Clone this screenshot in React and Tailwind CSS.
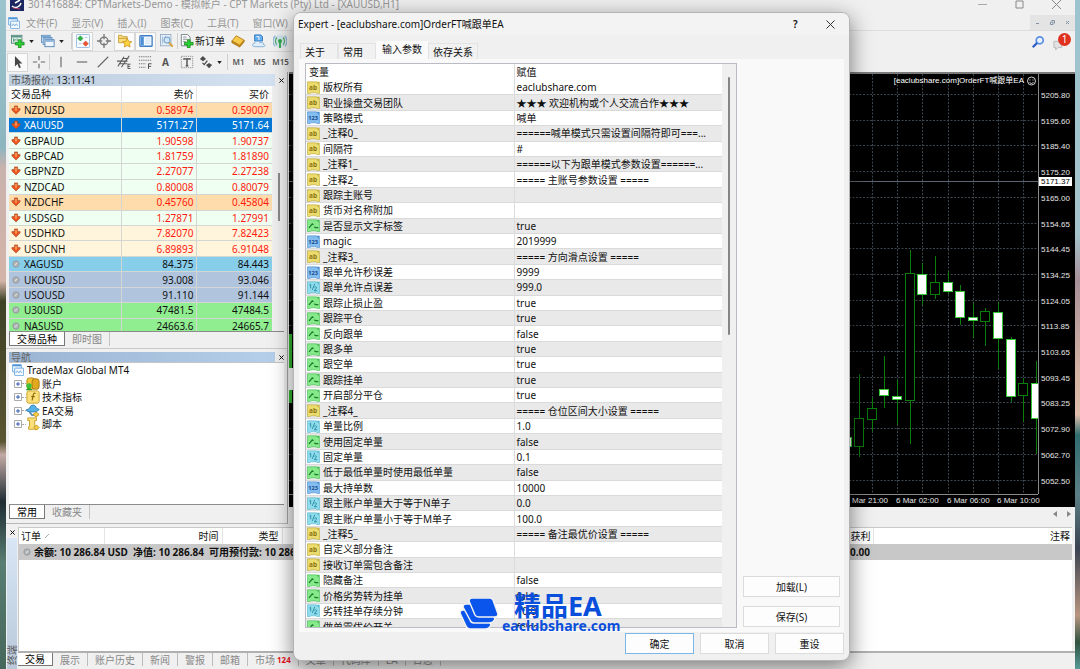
import React, { useState } from 'react';

const quotes = [
  { symbol: 'NZDUSD', bid: '0.58974', ask: '0.59007', row: 'bg-[#ffdcab]', down: true },
  { symbol: 'XAUUSD', bid: '5171.27', ask: '5171.64', row: 'bg-[#0078d7]', down: true, selected: true },
  { symbol: 'GBPAUD', bid: '1.90598', ask: '1.90737', row: 'bg-[#effff1]', down: true },
  { symbol: 'GBPCAD', bid: '1.81759', ask: '1.81890', row: 'bg-[#effff1]', down: true },
  { symbol: 'GBPNZD', bid: '2.27077', ask: '2.27238', row: 'bg-[#effff1]', down: true },
  { symbol: 'NZDCAD', bid: '0.80008', ask: '0.80079', row: 'bg-[#effff1]', down: true },
  { symbol: 'NZDCHF', bid: '0.45760', ask: '0.45804', row: 'bg-[#ffdcab]', down: true },
  { symbol: 'USDSGD', bid: '1.27871', ask: '1.27991', row: 'bg-[#effff1]', down: true },
  { symbol: 'USDHKD', bid: '7.82070', ask: '7.82423', row: 'bg-[#fff5dc]', down: true },
  { symbol: 'USDCNH', bid: '6.89893', ask: '6.91048', row: 'bg-[#fff5dc]', down: true },
  { symbol: 'XAGUSD', bid: '84.375', ask: '84.443', row: 'bg-[#87ceeb]' },
  { symbol: 'UKOUSD', bid: '93.008', ask: '93.046', row: 'bg-[#b0c4de]' },
  { symbol: 'USOUSD', bid: '91.110', ask: '91.144', row: 'bg-[#b0c4de]' },
  { symbol: 'U30USD', bid: '47481.5', ask: '47484.5', row: 'bg-[#90ee90]' },
  { symbol: 'NASUSD', bid: '24663.6', ask: '24665.7', row: 'bg-[#90ee90]' },
];

const params = [
  ['str', '版权所有', 'eaclubshare.com'],
  ['str', '职业操盘交易团队', '★★★ 欢迎机构或个人交流合作★★★'],
  ['int', '策略模式', '喊单'],
  ['str', '_注释0_', '======喊单模式只需设置间隔符即可===...'],
  ['str', '间隔符', '#'],
  ['str', '_注释1_', '======以下为跟单模式参数设置======...'],
  ['str', '_注释2_', '===== 主账号参数设置 ====='],
  ['str', '跟踪主账号', ''],
  ['str', '货币对名称附加', ''],
  ['bool', '是否显示文字标签', 'true'],
  ['int', 'magic', '2019999'],
  ['str', '_注释3_', '===== 方向滑点设置 ====='],
  ['int', '跟单允许秒误差', '9999'],
  ['dbl', '跟单允许点误差', '999.0'],
  ['bool', '跟踪止损止盈', 'true'],
  ['bool', '跟踪平仓', 'true'],
  ['bool', '反向跟单', 'false'],
  ['bool', '跟多单', 'true'],
  ['bool', '跟空单', 'true'],
  ['bool', '跟踪挂单', 'true'],
  ['bool', '开启部分平仓', 'true'],
  ['str', '_注释4_', '===== 仓位区间大小设置 ====='],
  ['dbl', '单量比例', '1.0'],
  ['bool', '使用固定单量', 'false'],
  ['dbl', '固定单量', '0.1'],
  ['bool', '低于最低单量时使用最低单量', 'false'],
  ['int', '最大持单数', '10000'],
  ['dbl', '跟主账户单量大于等于N单子', '0.0'],
  ['dbl', '跟主账户单量小于等于M单子', '100.0'],
  ['str', '_注释5_', '===== 备注最优价设置 ====='],
  ['str', '自定义部分备注', ''],
  ['str', '接收订单需包含备注', ''],
  ['bool', '隐藏备注', 'false'],
  ['bool', '价格劣势转为挂单', 'false'],
  ['dbl', '劣转挂单存续分钟', '10.0'],
  ['bool', '做单需优价开关', 'false'],
];

const priceLevels = [
  '5205.80', '5195.60', '5185.40', '5175.20', '5165.00', '5154.65', '5144.45', '5134.25',
  '5124.05', '5113.85', '5103.65', '5093.45', '5083.25', '5072.90', '5062.70', '5052.50',
];

// x centre, body top, body bottom, wick top, wick bottom, bearish
const candles = [
  [847, 437, 446, 430, 452, true],
  [859, 418, 446, 374, 457, false],
  [872, 408, 419, 398, 431, false],
  [884, 389, 395, 356, 408, true],
  [897, 396, 399, 380, 425, true],
  [910, 273, 400, 250, 444, false],
  [922, 274, 294, 263, 305, true],
  [935, 282, 294, 256, 299, false],
  [948, 282, 291, 271, 294, true],
  [960, 291, 317, 285, 325, true],
  [973, 317, 320, 303, 338, true],
  [985, 311, 321, 308, 346, false],
  [998, 312, 338, 302, 369, true],
  [1011, 339, 396, 337, 402, true],
  [1023, 383, 395, 378, 422, false],
  [1036, 383, 418, 361, 454, true],
];

const Svg = ({ children, className = 'w-3.5 h-3.5' }) => (
  <svg viewBox="0 0 16 16" className={`shrink-0 ${className}`} fill="none" aria-hidden="true">
    {children}
  </svg>
);

const Plus = () => (
  <path d="M8.500 6.500h3v3h3.500v3h-3.500v3.500h-3v-3.500h-3.500v-3h3.500z" fill="#2bd334" stroke="#0e7d16" strokeWidth=".8" />
);

const NewChartIcon = () => (
  <Svg>
    <rect x=".5" y="1.500" width="12" height="9" fill="#e8f3f0" stroke="#4d8579" />
    <path d="M1 2h11v2H1z" fill="#5f9488" />
    <path d="M3 5v4M3 7h2v-1M7 5v3" stroke="#3e8a6c" />
    <Plus />
  </Svg>
);

const ProfilesIcon = () => (
  <Svg>
    <rect x=".5" y="1.500" width="10" height="8" fill="#dbeaf8" stroke="#5e8ebd" />
    <rect x="2.500" y="4" width="10" height="8" fill="#dbeaf8" stroke="#5e8ebd" />
    <rect x="4.500" y="6.500" width="10.500" height="8" fill="#eef6fd" stroke="#4d7fb3" />
    <path d="M1 3h9M3 5.500h9M5 8h9.500" stroke="#7ba6d2" strokeWidth="1.500" />
  </Svg>
);

const MarketWatchIcon = () => (
  <Svg>
    <rect x=".5" y=".5" width="15" height="15" rx="1" fill="#f6fbff" stroke="#8bb4dc" />
    <path d="M5 2l3 3-3 3-3-3z" fill="#2fb344" stroke="#1a8531" strokeWidth=".6" />
    <path d="M11 8l3 3-3 3-3-3z" fill="#f0532c" stroke="#b93314" strokeWidth=".6" />
    <path d="M10 4h3M3 11h3" stroke="#a8c4de" />
  </Svg>
);

const TargetIcon = () => (
  <Svg>
    <circle cx="8" cy="8" r="4.500" stroke="#777" strokeWidth="1.500" />
    <path d="M8 0v6M8 10v6M0 8h6M10 8h6" stroke="#777" strokeWidth="1.500" />
  </Svg>
);

const StarPath = () => (
  <path d="M10.500 5l1.700 3.300 3.500.500-2.600 2.500.700 3.600-3.300-1.700-3.200 1.700.600-3.600-2.600-2.500 3.600-.500z" fill="#ffd23d" stroke="#c08a12" strokeWidth=".8" />
);

const FavoritesIcon = () => (
  <Svg>
    <path d="M.5 1.500h4l1 1.500h5v7h-10z" fill="#f8dc7d" stroke="#c59b34" />
    <path d="M1 5h9" stroke="#c59b34" />
    <StarPath />
  </Svg>
);

const TerminalIcon = () => (
  <Svg>
    <rect x="1" y="2" width="14" height="12" rx="1" fill="#f4f9ff" stroke="#3f7fc4" strokeWidth="1.500" />
    <path d="M2 3h3.500v10H2z" fill="#4d8fd6" />
    <path d="M7 5.500h6M7 8h6M7 10.500h6" stroke="#c5d9ee" />
  </Svg>
);

const TesterIcon = () => (
  <Svg>
    <rect x=".5" y=".5" width="12" height="13" fill="#e5eef7" stroke="#90aac4" />
    <path d="M3 3v8M6 2v4M10 3v8" stroke="#8fb0d0" />
    <circle cx="8" cy="7" r="3.500" fill="#cfe6fa" stroke="#5f8fbd" />
    <path d="M10.500 10l4 4.500" stroke="#d8a23c" strokeWidth="2.200" />
  </Svg>
);

const NewOrderIcon = () => (
  <Svg>
    <path d="M1.500.5h7l3 3v10h-10z" fill="#fafafa" stroke="#6c7a80" />
    <path d="M3.500 3.500h4M3.500 6h5M3.500 8.500h3" stroke="#7b8a90" />
    <Plus />
  </Svg>
);

const GoldIcon = () => (
  <Svg>
    <path d="M1 8l5-6 9 5-5 6z" fill="#f7c948" stroke="#b17b12" />
    <path d="M1 8v2l9 5 5-6V7l-5 6z" fill="#cf9320" stroke="#9c6a0d" strokeWidth=".7" />
  </Svg>
);

const ServerIcon = () => (
  <Svg>
    <path d="M3 1h7l2 2v5H3z" fill="#64aef0" stroke="#2c75bd" />
    <path d="M5 3h3v4" stroke="#fff" />
    <path d="M3 14.500c-3 0-3-4 0-4 .5-3 5-3 6-.5 3-1 5 .5 4 2 2.500 0 2 2.500 0 2.500z" fill="#dfeefb" stroke="#7aa8d3" />
  </Svg>
);

const SignalIcon = () => (
  <Svg>
    <circle cx="8" cy="8" r="7.500" fill="#d6e6ee" />
    <path d="M4.500 4a5.500 5.500 0 000 8M11.500 4a5.500 5.500 0 010 8" stroke="#4fa663" strokeWidth="1.300" />
    <path d="M2.500 2a8.500 8.500 0 000 12M13.500 2a8.500 8.500 0 010 12" stroke="#8fb7d8" strokeWidth="1.300" />
    <circle cx="8" cy="8" r="2.300" fill="#2ea84a" />
    <path d="M8 9v7" stroke="#2ea84a" strokeWidth="2" />
  </Svg>
);

const CursorIcon = () => (
  <Svg>
    <path d="M4.500 1v12l2.800-2.600L9.300 15l2-.9-2-4.300H13z" fill="#484848" />
  </Svg>
);

const ChannelIcon = () => (
  <Svg>
    <path d="M1 13L8 2M5 14L14 1M0 7h12M2 10h10M6 4h7" stroke="#5a5a5a" strokeWidth="1.200" />
    <path d="M15.500 10.500H12.500v5h3M12.500 13h2.500" stroke="#444" />
  </Svg>
);

const FiboIcon = () => (
  <Svg>
    <path d="M1 2h14M1 6h14M1 10h8M1 14h8" stroke="#777" strokeWidth="1.200" strokeDasharray="1.500 1" />
    <path d="M15.500 10H12v6M12 13h3" stroke="#444" />
  </Svg>
);

const LabelIcon = () => (
  <Svg>
    <rect x="1.500" y="1.500" width="13" height="13" stroke="#888" strokeDasharray="1.500 1" />
    <path d="M4.500 5.500V4.500h7v1M8 4.500v8M6.500 12.500h3" stroke="#444" strokeWidth="1.500" />
  </Svg>
);

const ArrowsIcon = () => (
  <Svg>
    <path d="M4.500 1l3.500 3.500-3.500 2.500L1 4.500zM11.500 9l3.500 2.500-3.500 3.500L8 11.500z" fill="#4b4b4b" />
    <path d="M4 9l2 2 3.500-4.500" stroke="#4b4b4b" strokeWidth="1.500" />
  </Svg>
);

const ChartWindowIcon = () => (
  <Svg className="w-3 h-3">
    <rect x=".5" y=".5" width="12" height="10" rx="1" fill="#e8f4ff" stroke="#4c94d8" />
    <path d="M1 2h11" stroke="#4c94d8" strokeWidth="2" />
    <rect x="3.500" y="5.500" width="12" height="10" rx="1" fill="#f5faff" stroke="#4c94d8" />
    <path d="M5 12l2-3 2 3 2-3 2 3" stroke="#5d9fdc" />
  </Svg>
);

const DownIcon = () => (
  <Svg className="w-2.5 h-2.5">
    <path d="M5.500 1.500h5v4H14.500v2.500l-6.500 6.500L1.500 8V5.500h4z" fill="#e9531d" stroke="#a8502e" />
    <path d="M6.500 3h3v6h-3z" fill="#ff9350" />
  </Svg>
);

const IdleIcon = () => (
  <Svg className="w-2.5 h-2.5">
    <circle cx="8" cy="8" r="5" fill="#b4b8ba" stroke="#8f9396" strokeWidth="1.500" />
    <path d="M5.500 10.500l5-5" stroke="#dcdedf" strokeWidth="1.500" />
  </Svg>
);

const typeStyles = {
  str: { fill: '#ecdc6e', edge: '#b5a02c', fold: '#c7b33d' },
  int: { fill: '#84bdf0', edge: '#4386c8', fold: '#3f87cd' },
  dbl: { fill: '#8fdcec', edge: '#4bb0c6', fold: '#4fb8cf' },
  bool: { fill: '#86ea8b', edge: '#3bb549', fold: '#44bd50' },
};

const TypeIcon = ({ type }) => {
  const s = typeStyles[type];
  return (
    <Svg className="w-[13px] h-[13px]">
      <path d="M.5 1h11l4 4v10.500H12l-1-1H5l-1 1H.5z" fill={s.fill} stroke={s.edge} strokeWidth=".7" />
      <path d="M11.500 1l4 4v-4z" fill={s.fold} />
      {type === 'bool' && (
        <path d="M2.500 11l4-5 1.500 1M9 9.500l1.500 1H14" stroke="#1c7e2a" strokeWidth="1.600" />
      )}
      {type === 'dbl' && (
        <path d="M3 5l1.500-1v5M9.500 3.500L6.500 11M9 8c1-1.500 3.500-1 2.500.8L9 12h3.500" stroke="#2187a0" strokeWidth="1.100" />
      )}
      {(type === 'str' || type === 'int') && (
        <text
          x="7.500"
          y="11.500"
          textAnchor="middle"
          fontSize={type === 'int' ? 7 : 8}
          fontWeight="bold"
          fill={type === 'str' ? '#8a7614' : '#17498a'}
        >
          {type === 'str' ? 'ab' : '123'}
        </text>
      )}
    </Svg>
  );
};

const ToolButton = ({ label, active, children }) => (
  <button
    aria-label={label}
    className={`w-[21px] h-[19px] flex items-center justify-center shrink-0 ${
      active ? 'bg-[#fafafa] border border-[#d6d6d6]' : ''
    }`}
  >
    {children}
  </button>
);

const Caret = () => (
  <svg viewBox="0 0 6 4" className="w-[5px] h-[3px] shrink-0" aria-hidden="true">
    <path d="M0 0h6L3 4z" fill="#222" />
  </svg>
);

const Separator = () => <span className="w-px h-4 bg-[#cfcfcf] shrink-0" />;

const TitleBar = () => (
  <div className="h-[22px] shrink-0 flex items-center pl-1 pr-3.5 text-[#979797]">
    <svg viewBox="0 0 14 14" className="w-3.5 h-3.5 shrink-0" aria-hidden="true">
      <rect width="14" height="14" fill="#1c2660" />
      <path d="M2 9c3 3 8 1 9-3M5 6l5-3" stroke="#fff" strokeWidth="1.500" fill="none" />
      <path d="M3 11l7 1" stroke="#c0446a" />
    </svg>
    <span className="ml-1 whitespace-nowrap flex-1">301416884: CPTMarkets-Demo - 模拟帐户 - CPT Markets (Pty) Ltd - [XAUUSD,H1]</span>
    <div className="flex gap-7">
      <button aria-label="最小化">
        <svg viewBox="0 0 9 9" className="w-[9px] h-[9px]"><path d="M0 4.500h9" stroke="#aaa" /></svg>
      </button>
      <button aria-label="最大化">
        <svg viewBox="0 0 9 9" className="w-[9px] h-[9px]"><path d="M1 1h7v7H1z" stroke="#888" fill="none" /></svg>
      </button>
      <button aria-label="关闭">
        <svg viewBox="0 0 9 9" className="w-[9px] h-[9px]"><path d="M0 0l9 9M9 0L0 9" stroke="#888" /></svg>
      </button>
    </div>
  </div>
);

const MenuBar = () => (
  <nav className="h-4 shrink-0 flex items-center pl-[2px] border-b border-[#dedede] text-[#979797]">
    <ChartWindowIcon />
    <div className="flex gap-3.5 pl-1.5 flex-1 whitespace-nowrap">
      {['文件(F)', '显示(V)', '插入(I)', '图表(C)', '工具(T)', '窗口(W)'].map(item => (
        <button key={item}>{item}</button>
      ))}
    </div>
    <div className="self-stretch w-[45px] bg-[#e4e4e4] flex items-center justify-around">
      <svg viewBox="0 0 5 5" className="w-[5px] h-[5px]"><path d="M1 3.500h3" stroke="#8592a3" /></svg>
      <svg viewBox="0 0 5 5" className="w-[5px] h-[5px]"><path d="M1.500.5h3v3M.5 2h2.500v2.500H.5z" stroke="#8592a3" fill="none" /></svg>
      <svg viewBox="0 0 5 5" className="w-[5px] h-[5px]"><path d="M1 1l3 3M4 1L1 4" stroke="#8592a3" /></svg>
    </div>
  </nav>
);

const Toolbars = () => (
  <div className="flex h-[41px] shrink-0 bg-[#f0f0f0]">
    <div className="flex-1 min-w-0 overflow-hidden">
      <div className="flex items-center h-[21px] pl-[5px] w-[300px] border-b border-[#dcdcdc]">
        <button aria-label="新图表" className="w-[30px] flex items-center gap-1 shrink-0"><NewChartIcon /><Caret /></button>
        <button aria-label="配置文件" className="w-[30px] flex items-center gap-1 shrink-0"><ProfilesIcon /><Caret /></button>
        <Separator />
        <ToolButton label="市场报价" active><MarketWatchIcon /></ToolButton>
        <ToolButton label="数据窗口"><TargetIcon /></ToolButton>
        <ToolButton label="导航" active><FavoritesIcon /></ToolButton>
        <ToolButton label="终端" active><TerminalIcon /></ToolButton>
        <ToolButton label="策略测试"><TesterIcon /></ToolButton>
        <Separator />
        <button className="flex items-center gap-px px-0.5 whitespace-nowrap shrink-0"><NewOrderIcon />新订单</button>
        <ToolButton label="MetaEditor"><GoldIcon /></ToolButton>
        <ToolButton label="虚拟主机"><ServerIcon /></ToolButton>
        <ToolButton label="信号"><SignalIcon /></ToolButton>
      </div>
      <div className="flex items-center h-5 pl-px text-[#555]">
        <ToolButton label="光标" active><CursorIcon /></ToolButton>
        <ToolButton label="十字准线"><Svg><path d="M8 1v5M8 10v5M1 8h5M10 8h5" stroke="#666" strokeWidth="1.300" /></Svg></ToolButton>
        <Separator />
        <ToolButton label="垂直线"><Svg><path d="M8 2v12" stroke="#666" strokeWidth="1.300" /></Svg></ToolButton>
        <ToolButton label="水平线"><Svg><path d="M2 8h12" stroke="#666" strokeWidth="1.300" /></Svg></ToolButton>
        <ToolButton label="趋势线"><Svg><path d="M2 14L14 2" stroke="#666" strokeWidth="1.300" /></Svg></ToolButton>
        <ToolButton label="等距通道"><ChannelIcon /></ToolButton>
        <ToolButton label="斐波那契"><FiboIcon /></ToolButton>
        <ToolButton label="文字"><span className="font-bold">A</span></ToolButton>
        <ToolButton label="文字标签"><LabelIcon /></ToolButton>
        <button aria-label="箭头" className="w-[30px] flex items-center gap-1 pl-0.5 shrink-0"><ArrowsIcon /><Caret /></button>
        <Separator />
        {['M1', 'M5', 'M15'].map(tf => (
          <button key={tf} className="w-[21px] text-[8px] font-semibold text-center shrink-0">{tf}</button>
        ))}
      </div>
    </div>
    <div className="flex items-start gap-2 pt-1 pr-1">
      <button aria-label="搜索">
        <Svg>
          <circle cx="10" cy="6" r="4" stroke="#5b8fe6" strokeWidth="2" fill="#e9f2ff" />
          <path d="M7 9l-5 5" stroke="#2d5fc4" strokeWidth="2.500" />
        </Svg>
      </button>
      <button aria-label="消息" className="relative w-[18px] h-4">
        <Svg><path d="M1 6h9v7H6l-3 3v-3H1z" fill="#e2e2e2" stroke="#b5b5b5" /></Svg>
        <span className="absolute right-0 -top-0.5 w-[13px] h-[13px] rounded-full bg-[#e0301e] text-white text-[10px] leading-[13px] text-center">1</span>
      </button>
    </div>
  </div>
);

const CloseMark = () => (
  <svg viewBox="0 0 6 6" className="w-[5px] h-[5px]" aria-hidden="true">
    <path d="M.5.5l5 5M5.500.5l-5 5" stroke="#111" strokeWidth="1.200" />
  </svg>
);

const PanelTabs = ({ tabs }) => (
  <div className="flex h-[15px] shrink-0 border-t border-[#8b8b8b] mr-[3px]">
    {tabs.map((tab, i) => (
      <button
        key={tab}
        className={`px-[7px] h-full flex items-center ${
          i === 0 ? 'bg-white text-black border-x border-b border-[#777]' : 'text-[#888] border-r border-[#c4c4c4]'
        }`}
      >
        {tab}
      </button>
    ))}
  </div>
);

const MarketWatch = () => (
  <section className="h-[277px] shrink-0 flex flex-col pl-[3px] py-0.5 border-b border-[#c9c9c9]">
    <div className="h-3 shrink-0 flex items-center text-[#555]">
      <div className="w-[266px] h-full pl-0.5 flex items-center whitespace-pre bg-gradient-to-r from-[#bccddf] to-[#d5e2f1]">
        市场报价: <span className="text-[#222]">13:11:41</span>
      </div>
      <button aria-label="关闭" className="ml-1"><CloseMark /></button>
    </div>
    <div className="flex-1 min-h-0 overflow-hidden flex">
      <table className="w-[263px] h-[247px] shrink-0 table-fixed border-collapse bg-white">
        <thead>
          <tr className="h-4">
            <th className="w-28 p-0 pl-0.5 text-left font-normal">交易品种</th>
            <th className="w-[75px] p-0 pr-0.5 text-right font-normal border-l border-[#e4e4e4]">卖价</th>
            <th className="p-0 pr-[3px] text-right font-normal border-l border-[#e4e4e4]">买价</th>
          </tr>
        </thead>
        <tbody>
          {quotes.map(q => {
            const color = q.selected ? 'text-white' : q.down ? 'text-[#ff1a10]' : 'text-[#111]';
            return (
              <tr key={q.symbol} className={`${q.row} border-t border-[#d3d6d3]`}>
                <td className={`p-0 pl-0.5 ${q.selected ? 'text-white' : ''}`}>
                  <span className="flex items-center gap-[3px]">
                    {q.down ? <DownIcon /> : <IdleIcon />}
                    {q.symbol}
                  </span>
                </td>
                <td className={`p-0 pr-0.5 text-right border-l border-[#d3d6d3] ${color}`}>{q.bid}</td>
                <td className={`p-0 pr-[3px] text-right border-l border-[#d3d6d3] ${color}`}>{q.ask}</td>
              </tr>
            );
          })}
        </tbody>
      </table>
      <div className="flex-1 pl-1.5 pt-[87px]">
        <div className="w-0.5 h-12 bg-[#8a8a8a]" />
      </div>
    </div>
    <PanelTabs tabs={['交易品种', '即时图']} />
  </section>
);

const treeItems = [
  {
    label: '账户',
    icon: (
      <Svg>
        <rect x="1" y="1" width="9" height="13" rx="3" fill="#f3c332" stroke="#ad8213" />
        <rect x="7" y="2" width="8" height="12" rx="3" fill="#e2a91f" stroke="#9f7411" />
        <circle cx="3.500" cy="10" r="3" fill="#3cc23a" />
        <path d="M0 15c0-3 7-3 7 0z" fill="#22a428" />
      </Svg>
    ),
  },
  {
    label: '技术指标',
    icon: (
      <Svg>
        <rect x="1" y="1" width="14" height="14" rx="2" fill="#fbe07a" stroke="#c79c22" />
        <path d="M11 4c-2-1-2.500 0-3 3l-1 5M6 7.500h4" stroke="#8a6508" strokeWidth="1.300" />
      </Svg>
    ),
  },
  {
    label: 'EA交易',
    icon: (
      <Svg>
        <path d="M4 5c1-5 7-5 8 0l3 1c-1 4-13 4-15 1z" fill="#55b2e6" stroke="#2b7fb5" />
        <path d="M4 9l3 4 4-1" stroke="#5b8fb5" strokeWidth="2" />
        <path d="M11.500 9l3.500 3-3.500 3-3.500-3z" fill="#f5cf45" stroke="#b98d1b" />
      </Svg>
    ),
  },
  {
    label: '脚本',
    icon: (
      <Svg>
        <path d="M2 1h10v3h-2v7h2v3H3v-3h1V4H2z" fill="#fbe07a" stroke="#c79c22" />
        <path d="M12 9l3 3-3 3-3-3z" fill="#f5cf45" stroke="#b98d1b" />
      </Svg>
    ),
  },
];

const Navigator = () => (
  <section className="flex-1 min-h-0 flex flex-col pl-[3px] pt-[3px] pb-1 border-b border-[#b8b8b8]">
    <div className="h-2.5 shrink-0 flex items-center text-[#666]">
      <div className="w-[266px] h-full pl-0.5 flex items-center bg-gradient-to-r from-[#9ab4d2] to-[#b5cee9]">导航</div>
      <button aria-label="关闭" className="ml-1"><CloseMark /></button>
    </div>
    <div className="flex-1 min-h-0 mr-[3px] bg-white border-t border-[#c4c4c4]">
      <div className="h-3.5 flex items-center gap-[3px] pl-[3px]"><ChartWindowIcon />TradeMax Global MT4</div>
      <ul className="grid grid-rows-4 h-[54px] pl-[5px]">
        {treeItems.map(item => (
          <li key={item.label} className="flex items-center">
            <svg viewBox="0 0 8 8" className="w-2 h-2" aria-hidden="true">
              <path d="M.5.5h7v7h-7z" fill="#fff" stroke="#aaa" />
              <path d="M2 4h4M4 2v4" stroke="#3b5cb0" />
            </svg>
            <span className="w-1 border-t border-dotted border-[#aaa]" />
            <span className="flex items-center gap-0.5">{item.icon}{item.label}</span>
          </li>
        ))}
      </ul>
    </div>
    <PanelTabs tabs={['常用', '收藏夹']} />
  </section>
);

const levelY = i => 95 + Math.round(i * 25.7);

const Chart = () => (
  <div className="h-[435px] shrink-0 overflow-hidden flex justify-end bg-black">
    <svg
      viewBox="289 72 786 435"
      className="w-[786px] h-[435px] shrink-0 font-['Liberation_Sans','Noto_Sans_CJK_SC',sans-serif]"
      fontSize="8"
      fill="#e6e6e6"
    >
      <rect x="289" y="72" width="786" height="435" fill="#000" />
      <g stroke="#3c4650" strokeDasharray="2 1.500">
        {priceLevels.map((p, i) => (
          <path key={p} d={`M289 ${levelY(i) - 0.5}H1038`} />
        ))}
        {[847, 872, 897, 922, 948, 973, 998, 1023].map(x => (
          <path key={x} d={`M${x + 0.5} 74V494`} />
        ))}
      </g>
      <path d="M289 181.500H1038" stroke="#5c6670" />
      <g shapeRendering="crispEdges">
        {candles.map(([x, top, bottom, high, low, bear]) => (
          <g key={x}>
            <path d={`M${x + 0.5} ${high}V${low}`} stroke="#0a7d0a" />
            <rect
              x={x - 4.5}
              y={top + 0.5}
              width="9"
              height={bottom - top}
              fill={bear ? '#fff' : '#000'}
              stroke={bear ? '#35c435' : '#0a7d0a'}
            />
          </g>
        ))}
        <path d="M290.500 334V403" stroke="#2fb52f" strokeWidth="3" />
        <rect x="289" y="368" width="5" height="22" fill="#fff" />
      </g>
      <rect x="1039" y="74" width="36" height="433" fill="#000" />
      <path d="M289 73H1075" stroke="#7a7a7a" strokeWidth="2" />
      <path d="M1038.500 74V494M289 494.500H1038" stroke="#8a8a8a" />
      {priceLevels.map((p, i) => (
        <text key={p} x="1041" y={levelY(i) + 3}>{p}</text>
      ))}
      <rect x="1039" y="177" width="33" height="9" fill="#fff" />
      <text x="1041" y="184" fill="#000">5171.37</text>
      <text x="852" y="503">Mar 21:00</text>
      <text x="896" y="503">6 Mar 02:00</text>
      <text x="947" y="503">6 Mar 06:00</text>
      <text x="997" y="503">6 Mar 10:00</text>
      <text x="1024" y="83" textAnchor="end" fill="#fff">[eaclubshare.com]OrderFT喊跟单EA</text>
      <circle cx="1031.500" cy="81" r="4" fill="none" stroke="#fff" strokeWidth=".8" />
      <path d="M1029.500 82.500q2 2 4 0M1030 79.500v1M1033 79.500v1" fill="none" stroke="#fff" strokeWidth=".8" />
    </svg>
  </div>
);

const terminalTabs = ['交易', '展示', '账户历史', '新闻', '警报', '邮箱', '市场', '文章', '代码库', 'EA', '日志'];

const Terminal = () => (
  <section className="h-[142px] shrink-0 flex">
    <div className="w-3 flex flex-col items-center shrink-0">
      <button aria-label="关闭" className="h-[11px]"><CloseMark /></button>
      <div className="flex-1 w-[10px] bg-gradient-to-b from-[#d8e6f5] to-[#b9c9da] flex items-end justify-center pb-1">
        <span className="text-[#555] leading-none [writing-mode:vertical-rl] [text-orientation:sideways] rotate-180">终端</span>
      </div>
    </div>
    <div className="flex-1 min-w-0 flex flex-col">
      <div className="flex-1 bg-white border-t border-l border-[#c9c9c9] mr-[3px]">
        <table className="w-full table-fixed border-collapse">
          <thead>
            <tr className="h-4">
              <th className="w-[85px] p-0 pl-0.5 text-left font-normal">
                <span className="flex items-center gap-1">
                  订单
                  <svg viewBox="0 0 4 4" className="w-1 h-1" aria-hidden="true"><path d="M0 4l4-4" stroke="#aaa" /></svg>
                </span>
              </th>
              <th className="w-[118px] p-0 pr-[3px] text-right font-normal border-l border-[#e4e4e4]">时间</th>
              <th className="w-[60px] p-0 pr-[3px] text-right font-normal border-l border-[#e4e4e4]">类型</th>
              <th className="p-0 border-l border-[#e4e4e4]" />
              <th className="w-[60px] p-0 pr-0.5 text-right font-normal">获利</th>
              <th className="w-[199px] p-0 pr-0.5 text-right font-normal border-l border-[#e4e4e4]">注释</th>
            </tr>
          </thead>
          <tbody>
            <tr className="h-4 bg-[#c8c8c8] font-bold">
              <td colSpan={4} className="p-0 pl-[3px] overflow-hidden">
                <span className="flex items-center gap-0.5 whitespace-pre">
                  <IdleIcon />余额: 10 286.84 USD  净值: 10 286.84  可用预付款: 10 286.84
                </span>
              </td>
              <td className="p-0 pr-[3px] text-right">0.00</td>
              <td />
            </tr>
          </tbody>
        </table>
      </div>
      <div className="h-[18px] shrink-0 flex items-start border-t-2 border-[#b0b0b0] text-[#888] whitespace-nowrap">
        {terminalTabs.map((tab, i) => (
          <button
            key={tab}
            className={`h-[13px] px-[7px] flex items-center border-r shrink-0 ${
              i === 0 ? 'bg-white text-black border-b border-[#777]' : 'border-[#bbb]'
            }`}
          >
            {tab}
            {tab === '市场' && <span className="ml-0.5 text-[8px] font-bold text-[#e81123]">124</span>}
          </button>
        ))}
      </div>
    </div>
  </section>
);

const dialogTabs = ['关于', '常用', '输入参数', '依存关系'];

const InputsTable = () => (
  <div className="w-[432px] shrink-0 overflow-hidden flex bg-[#f0f0f0] border border-[#b9bcc4]">
    <table className="w-[416px] h-[571px] shrink-0 table-fixed border-collapse bg-white">
      <thead>
        <tr className="h-4">
          <th className="w-[208px] p-0 pl-[3px] text-left font-normal">变量</th>
          <th className="p-0 pl-0.5 text-left font-normal border-l border-[#dcdcdc]">赋值</th>
        </tr>
      </thead>
      <tbody>
        {params.map(([type, name, value], i) => (
          <tr key={name} className={i % 2 ? 'bg-[#e9e9e9] border-y border-[#dadada]' : 'bg-white'}>
            <td className="p-0 pl-px">
              <span className="flex items-center gap-[3px] whitespace-nowrap"><TypeIcon type={type} />{name}</span>
            </td>
            <td className="p-0 pl-0.5 whitespace-nowrap border-l border-[#dcdcdc]">{value}</td>
          </tr>
        ))}
      </tbody>
    </table>
    <div className="flex-1 pl-1.5 pt-[13px]">
      <div className="w-0.5 h-[258px] rounded-full bg-[#858585]" />
    </div>
  </div>
);

const DialogButton = ({ children, className = '' }) => (
  <button className={`h-[21px] bg-[#fdfdfd] border flex items-center justify-center ${className}`}>{children}</button>
);

const ExpertDialog = () => {
  const [activeTab, setActiveTab] = useState('输入参数');

  return (
    <div
      role="dialog"
      aria-label="Expert"
      className="absolute left-[293px] top-3 bottom-2 w-[557px] flex flex-col rounded-lg border border-[#b4b4b4] bg-[#f0f0f0] shadow-[0_6px_22px_rgba(0,0,0,0.5)] overflow-hidden"
    >
      <header className="h-[22px] shrink-0 flex items-center pl-1 pr-3.5 bg-[#f3f3f3]">
        <h1 className="flex-1">Expert - [eaclubshare.com]OrderFT喊跟单EA</h1>
        <button className="w-[33px] text-left font-semibold">?</button>
        <button aria-label="关闭">
          <svg viewBox="0 0 9 9" className="w-[9px] h-[9px]"><path d="M.5.5l8 8M8.500.5l-8 8" stroke="#333" /></svg>
        </button>
      </header>
      <div className="h-6 shrink-0 flex items-end pl-1.5">
        {dialogTabs.map(tab => (
          <button
            key={tab}
            onClick={() => setActiveTab(tab)}
            className={`flex items-center border-[#e3e3e3] ${
              tab.length > 2 ? 'px-1' : 'pl-1 pr-3'
            } ${activeTab === tab ? 'h-[18px] px-1.5 pb-0.5 bg-[#fafafa]' : 'h-4 border-t border-x bg-[#f1f1f1]'}`}
          >
            {tab}
          </button>
        ))}
      </div>
      <div className="flex-1 min-h-0 mx-[5px] p-1 pl-1.5 pr-1 flex justify-between bg-[#f9f9f9]">
        <InputsTable />
        <div className="w-[97px] flex flex-col justify-end gap-[9px] pb-px">
          <DialogButton className="border-[#dcdcdc]">加载(L)</DialogButton>
          <DialogButton className="border-[#dcdcdc]">保存(S)</DialogButton>
        </div>
      </div>
      <footer className="h-[28px] shrink-0 flex items-start justify-end gap-1.5 pt-px pr-[5px]">
        <DialogButton className="w-[69px] border-[#7db7ea]">确定</DialogButton>
        <DialogButton className="w-[69px] border-[#dcdcdc]">取消</DialogButton>
        <DialogButton className="w-[69px] border-[#dcdcdc]">重设</DialogButton>
      </footer>
      <div className="absolute left-[166px] bottom-[26px] flex items-center gap-1 text-[#0a4fdc] font-bold pointer-events-none">
        <svg
          viewBox="0 0 38 32"
          className="w-[38px] h-8"
          fill="#0a55ec"
          stroke="#f2f2f2"
          strokeWidth="1.500"
          strokeLinejoin="round"
          aria-hidden="true"
        >
          <path d="M3 12h19q2 0 3 2l6 13q-2 4-6 4H10q-3 0-4-3L0 15q0-3 3-3z" />
          <path d="M6 6h19q2 0 3 2l7 13q-2 4-6 4H14q-3 0-4-3L3 9q0-3 3-3z" />
          <path d="M12 0h18q2 0 3 2l5 14q0 3-3 3H19q-3 0-4-2L9 3q0-3 3-3z" />
        </svg>
        <div className="flex flex-col">
          <span className="pl-3 text-[27px] leading-6 whitespace-nowrap">精品EA</span>
          <span className="text-[14px] leading-4 whitespace-nowrap">eaclubshare.com</span>
        </div>
      </div>
    </div>
  );
};

export default function App() {
  return (
    <div className="relative h-screen overflow-hidden flex bg-[#9cc4cf] text-[10px] leading-[12px] text-[#111] font-['Noto_Sans','Noto_Sans_CJK_SC',sans-serif]">
      <div className="w-1.5 shrink-0 bg-[linear-gradient(to_bottom,#9cc4cf_0%,#8db5c0_22%,#c9b2ad_25%,#d3b4a8_42%,#3e4226_45%,#5a5532_66%,#c2aaa4_68%,#1f2c33_75%,#587d72_84%,#46675c_100%)]" />
      <div className="flex-1 min-w-0 -mt-[7px] flex flex-col bg-[#f0f0f0]">
        <TitleBar />
        <MenuBar />
        <Toolbars />
        <main className="flex-1 min-h-0 flex">
          <div className="w-[282px] shrink-0 flex flex-col border-r border-[#a9a9a9]">
            <MarketWatch />
            <Navigator />
          </div>
          <div className="flex-1 min-w-0 pl-px flex flex-col">
            <Chart />
            <div className="flex justify-end gap-2.5 pr-1 pt-1">
              <svg viewBox="0 0 4 6" className="w-1 h-1.5" aria-hidden="true"><path d="M4 0v6L0 3z" fill="#888" /></svg>
              <svg viewBox="0 0 4 6" className="w-1 h-1.5" aria-hidden="true"><path d="M0 0v6l4-3z" fill="#888" /></svg>
            </div>
          </div>
        </main>
        <div className="h-[3px] shrink-0" />
        <Terminal />
      </div>
      <div className="w-[5px] shrink-0 bg-[linear-gradient(to_bottom,#9cc4cf_0%,#a5c3cc_35%,#a8909a_42%,#d3b2a3_55%,#e0bda9_62%,#2f6d70_65%,#5d7f86_74%,#3a4250_82%,#b8957f_92%,#30533f_96%,#559a98_100%)]" />
      <ExpertDialog />
    </div>
  );
}
